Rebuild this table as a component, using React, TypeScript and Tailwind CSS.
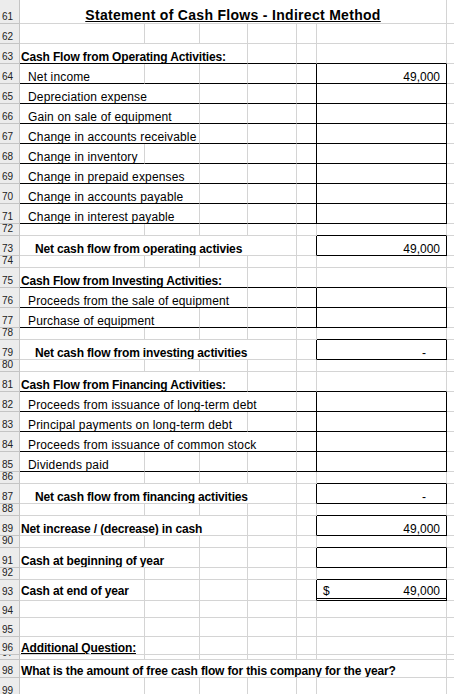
import React from 'react';

/**
 * Spreadsheet view of a cash flow statement (indirect method)
 * - row header column, light grid lines, black boxes around the amount column
 */

type Kind = 'title' | 'head' | 'item' | 'total' | 'question';

interface SheetRow {
  n: number;
  h: number;
  kind?: Kind;
  label?: string;
  /** number of columns (A..F) the label runs across */
  span?: number;
  /** black line under columns A-E */
  ab?: boolean;
  /** black line under column F */
  fb?: boolean;
  /** black box around column F */
  box?: boolean;
  dbl?: boolean;
  value?: string;
  dollar?: boolean;
}

const rows: SheetRow[] = [
  { n: 61, h: 24, kind: 'title', label: 'Statement of Cash Flows - Indirect Method', span: 6 },
  { n: 62, h: 20 },
  { n: 63, h: 20, kind: 'head', label: 'Cash Flow from Operating Activities:', span: 3, ab: true, fb: true },
  { n: 64, h: 20, kind: 'item', label: 'Net income', span: 1, ab: true, box: true, value: '49,000' },
  { n: 65, h: 20, kind: 'item', label: 'Depreciation expense', span: 2, ab: true, box: true },
  { n: 66, h: 20, kind: 'item', label: 'Gain on sale of equipment', span: 2, ab: true, box: true },
  { n: 67, h: 20, kind: 'item', label: 'Change in accounts receivable', span: 2, ab: true, box: true },
  { n: 68, h: 20, kind: 'item', label: 'Change in inventory', span: 1, ab: true, box: true },
  { n: 69, h: 20, kind: 'item', label: 'Change in prepaid expenses', span: 2, ab: true, box: true },
  { n: 70, h: 20, kind: 'item', label: 'Change in accounts payable', span: 2, ab: true, box: true },
  { n: 71, h: 20, kind: 'item', label: 'Change in interest payable', span: 2, ab: true, box: true },
  { n: 72, h: 12, fb: true },
  { n: 73, h: 20, kind: 'total', label: 'Net cash flow from operating activies', span: 4, box: true, value: '49,000' },
  { n: 74, h: 12 },
  { n: 75, h: 20, kind: 'head', label: 'Cash Flow from Investing Activities:', span: 3, ab: true, fb: true },
  { n: 76, h: 20, kind: 'item', label: 'Proceeds from the sale of equipment', span: 3, ab: true, box: true },
  { n: 77, h: 20, kind: 'item', label: 'Purchase of equipment', span: 2, ab: true, box: true },
  { n: 78, h: 12, fb: true },
  { n: 79, h: 20, kind: 'total', label: 'Net cash flow from investing activities', span: 4, box: true, value: '-' },
  { n: 80, h: 12 },
  { n: 81, h: 20, kind: 'head', label: 'Cash Flow from Financing Activities:', span: 3, ab: true, fb: true },
  { n: 82, h: 20, kind: 'item', label: 'Proceeds from issuance of long-term debt', span: 4, ab: true, box: true },
  { n: 83, h: 20, kind: 'item', label: 'Principal payments on long-term debt', span: 3, ab: true, box: true },
  { n: 84, h: 20, kind: 'item', label: 'Proceeds from issuance of common stock', span: 4, ab: true, box: true },
  { n: 85, h: 20, kind: 'item', label: 'Dividends paid', span: 1, ab: true, box: true },
  { n: 86, h: 12, fb: true },
  { n: 87, h: 20, kind: 'total', label: 'Net cash flow from financing activities', span: 4, box: true, value: '-' },
  { n: 88, h: 12, fb: true },
  { n: 89, h: 20, kind: 'head', label: 'Net increase / (decrease) in cash', span: 3, box: true, value: '49,000' },
  { n: 90, h: 12, fb: true },
  { n: 91, h: 20, kind: 'head', label: 'Cash at beginning of year', span: 2, box: true },
  { n: 92, h: 12, fb: true },
  { n: 93, h: 21, kind: 'head', label: 'Cash at end of year', span: 1, box: true, dbl: true, dollar: true, value: '49,000' },
  { n: 94, h: 17 },
  { n: 95, h: 19 },
  { n: 96, h: 18, kind: 'question', label: 'Additional Question:', span: 1 },
  { n: 97, h: 5 },
  { n: 98, h: 18, kind: 'head', label: 'What is the amount of free cash flow for this company for the year?', span: 6 },
  { n: 99, h: 20 },
];

const heightClass: Record<number, string> = {
  5: 'h-[5px]',
  12: 'h-[12px]',
  17: 'h-[17px]',
  18: 'h-[18px]',
  19: 'h-[19px]',
  20: 'h-[20px]',
  21: 'h-[21px]',
  24: 'h-[24px]',
};

const spanClass: Record<number, string> = {
  1: 'col-span-1',
  2: 'col-span-2',
  3: 'col-span-3',
  4: 'col-span-4',
  5: 'col-span-5',
  6: 'col-span-6',
};

const labelClass: Record<Kind, string> = {
  title: 'justify-center font-bold text-[14px] tracking-[0.3px] leading-[16px] underline underline-offset-[1px]',
  head: 'pl-[1px] font-bold tracking-[-0.15px]',
  item: 'pl-[8px] tracking-[0.15px]',
  total: 'pl-[15px] font-bold tracking-[-0.15px]',
  question: 'pl-[1px] font-bold tracking-[-0.15px] underline underline-offset-[1px]',
};

const GRID_R = 'border-r-[#d4d4d4]';
const GRID_B = 'border-b-[#d4d4d4]';

const Row: React.FC<{ row: SheetRow }> = ({ row }) => {
  const span = row.span ?? 0;
  const bottomAE = row.ab ? 'border-b-black' : GRID_B;
  const bottomF = row.box || row.fb ? 'border-b-black' : GRID_B;
  // the double-ruled total sits a little higher in its cell
  const lift = row.dbl ? 'pb-[3px]' : '';
  const empties = [];
  for (let col = Math.max(span, 0) + 1; col <= 5; col++) {
    // column E carries the left edge of the amount box
    const right = col === 5 && row.box ? 'border-r-black' : GRID_R;
    empties.push(<div key={col} className={`border-b border-r ${bottomAE} ${right}`} />);
  }

  return (
    <div className={`grid grid-cols-[20px_125px_55px_48px_49px_20px_130px_1fr] ${heightClass[row.h]}`}>
      {/* row header */}
      <div
        className={`flex items-end overflow-hidden border-b border-r border-[#c4c4c4] bg-[#ececec] pl-[2px] text-[10px] leading-[10px] text-[#222] ${
          row.dbl ? 'pb-[3px]' : 'pb-[1px]'
        }`}
      >
        {row.n}
      </div>

      {row.label && row.kind && (
        <div
          className={`flex items-end overflow-hidden whitespace-nowrap border-b border-r text-[12px] leading-[12px] ${spanClass[span]} ${
            span === 6 ? GRID_B : bottomAE
          } ${GRID_R} ${labelClass[row.kind]} ${lift}`}
        >
          {row.label}
        </div>
      )}

      {empties}

      {/* amount column */}
      {span < 6 && (
        <div
          className={`flex items-end overflow-hidden whitespace-nowrap text-[12px] leading-[12px] border-r ${
            row.box ? 'border-r-black' : GRID_R
          } ${row.dbl ? 'border-b-[3px] border-double pb-[1px]' : 'border-b'} ${bottomF} ${
            row.dollar ? 'justify-between pl-[6px] pr-[6px]' : row.value === '-' ? 'justify-end pr-[20px]' : 'justify-end pr-[6px]'
          }`}
        >
          {row.dollar && <span>$</span>}
          {row.value && <span>{row.value}</span>}
        </div>
      )}

      <div className={`border-b ${GRID_B}`} />
    </div>
  );
};

const App: React.FC = () => {
  return (
    <div className="h-[694px] w-[454px] overflow-hidden bg-white font-['Liberation_Sans',Arial,sans-serif] text-black">
      {rows.map((row) => (
        <Row key={row.n} row={row} />
      ))}
    </div>
  );
};

export default App;
